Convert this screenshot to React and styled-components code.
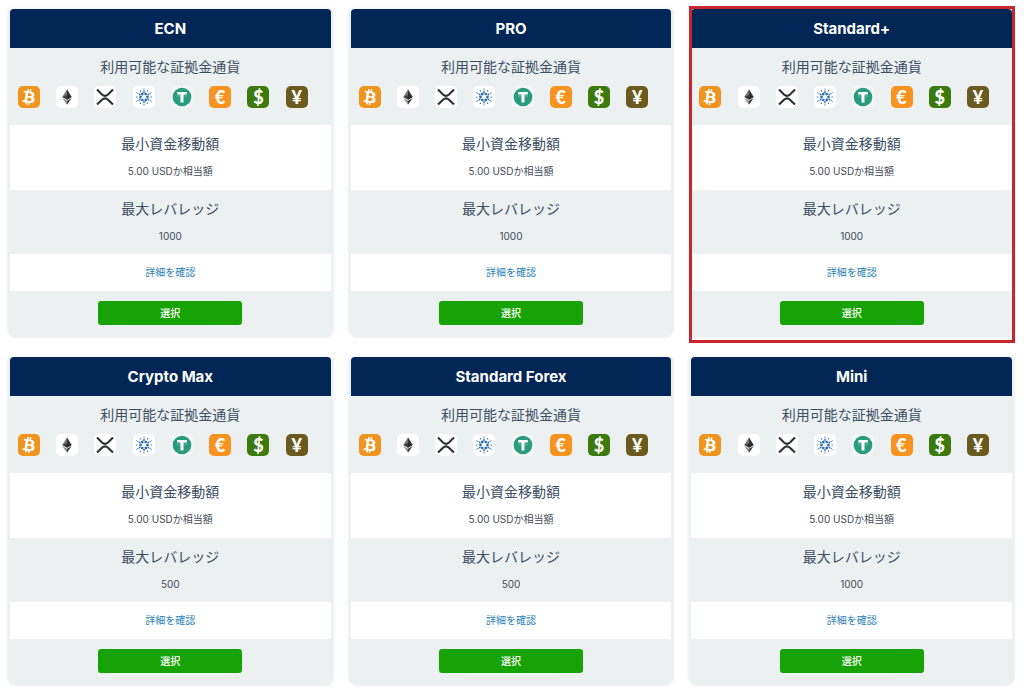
import React from "react";
import styled, { createGlobalStyle, css } from "styled-components";
import { FaBtc } from "react-icons/fa";

const GlobalStyle = createGlobalStyle`
  * {
    box-sizing: border-box;
  }
  body {
    margin: 0;
    background: #ffffff;
    color: #3a4a5c;
    font-family: Inter, "Noto Sans CJK JP", sans-serif;
  }
`;

const Grid = styled.main`
  display: grid;
  grid-template-columns: repeat(3, minmax(0, 1fr));
  gap: 20px 16px;
  padding: 9px 10px 8px 8px;
`;

const Card = styled.article`
  position: relative;
  padding: 0 2px;
  border-radius: 4px 4px 8px 8px;
  background: #ecf0f1;
  box-shadow: 0 0 3px rgba(30, 50, 70, 0.14);

  ${({ $highlighted }) =>
    $highlighted &&
    css`
      &::after {
        content: "";
        position: absolute;
        inset: -3px -1px -6px 0;
        border: 3px solid #c9252d;
        pointer-events: none;
      }
    `}
`;

const Title = styled.h2`
  margin: 0;
  height: 39px;
  border-radius: 4px 4px 0 0;
  background: #022757;
  color: #ffffff;
  font-family: Inter, sans-serif;
  font-size: 15px;
  font-weight: 700;
  line-height: 39px;
  text-align: center;
`;

const Section = styled.section`
  padding: ${({ $white }) => ($white ? "8px 0 11px" : "8px 0 10px")};
  background: ${({ $white }) => ($white ? "#ffffff" : "transparent")};
  text-align: center;
`;

const Label = styled.h3`
  margin: 0;
  color: #3c4e63;
  font-size: 14px;
  font-weight: 400;
  line-height: 22px;
`;

const Value = styled.p`
  margin: 8px 0 0;
  color: #444b55;
  font-size: 10px;
  line-height: 16px;
`;

const Currencies = styled.ul`
  display: flex;
  justify-content: space-between;
  margin: 8px 0 0;
  padding: 0 23px 7px 8px;
  list-style: none;
`;

const Currency = styled.li`
  display: flex;
  align-items: center;
  justify-content: center;
  width: 22px;
  height: 22px;
  border-radius: 5px;
  background: ${({ $color }) => $color};
  color: #ffffff;

  svg {
    display: block;
  }
`;

const BitcoinSign = styled(FaBtc)`
  width: 16px;
  height: 16px;
  transform: rotate(8deg);
`;

const Symbol = styled.span`
  font-family: Lato, sans-serif;
  font-size: 18px;
  font-weight: 900;
  line-height: 22px;
`;

const DetailRow = styled.div`
  height: 37px;
  background: #ffffff;
  text-align: center;
`;

const DetailLink = styled.a`
  display: inline-block;
  color: #2d83b5;
  font-size: 10px;
  line-height: 36px;
  text-decoration: none;
  vertical-align: top;
`;

const Footer = styled.footer`
  display: flex;
  justify-content: center;
  padding: 10px 0 12px;
`;

const SelectButton = styled.button`
  width: 45%;
  height: 24px;
  padding: 0;
  border: 0;
  border-radius: 3px;
  background: #17a305;
  color: #ffffff;
  font-family: inherit;
  font-size: 10px;
  font-weight: 500;
  line-height: 24px;
  cursor: pointer;
`;

const EthereumIcon = () => (
  <svg width="22" height="22" viewBox="0 0 22 22" aria-hidden="true">
    <path d="M11 3.2 6.3 11 11 13.8z" fill="#77777a" />
    <path d="M11 3.2 15.7 11 11 13.8z" fill="#343437" />
    <path d="M6.3 12 11 18.8V14.8z" fill="#8a8a8d" />
    <path d="M15.7 12 11 18.8V14.8z" fill="#3b3b3e" />
    <path d="M6.3 11 11 9l4.7 2L11 13.8z" fill="#252528" opacity=".7" />
  </svg>
);

const RippleIcon = () => (
  <svg width="22" height="22" viewBox="0 0 22 22" aria-hidden="true">
    <path
      d="M3 3.6 8 8.5q3 2.8 6 0L19 3.6M3 18.6 8 13.7q3-2.8 6 0l5 4.9"
      fill="none"
      stroke="#2b3035"
      strokeWidth="2.1"
    />
  </svg>
);

const CardanoIcon = () => (
  <svg width="22" height="22" viewBox="0 0 22 22" fill="#2a6cb4" aria-hidden="true">
    {[0, 60, 120, 180, 240, 300].map((angle) => (
      <g key={angle} transform={`rotate(${angle} 11 11)`}>
        <circle cx="12.7" cy="8" r="1.35" />
        <circle cx="11" cy="6" r="0.9" />
        <circle cx="11" cy="3.9" r="0.65" />
        <circle cx="11" cy="2.2" r="0.45" />
        <circle cx="14.6" cy="4.8" r="0.7" />
      </g>
    ))}
  </svg>
);

const TetherIcon = () => (
  <svg width="22" height="22" viewBox="0 0 22 22" aria-hidden="true">
    <circle cx="11" cy="11" r="9.3" fill="#289b7c" />
    <path d="M6.2 6h9.6v2.6h-3.3v8H9.5v-8H6.2z" fill="#ffffff" />
    <ellipse cx="11" cy="10.2" rx="5.2" ry="1" fill="none" stroke="#ffffff" strokeWidth=".4" opacity=".5" />
  </svg>
);

const currencies = [
  { name: "Bitcoin", color: "#ef951f", icon: <BitcoinSign aria-hidden="true" /> },
  { name: "Ethereum", color: "#ffffff", icon: <EthereumIcon /> },
  { name: "XRP", color: "#ffffff", icon: <RippleIcon /> },
  { name: "Cardano", color: "#ffffff", icon: <CardanoIcon /> },
  { name: "Tether", color: "#f2f6f6", icon: <TetherIcon /> },
  { name: "Euro", color: "#f7931e", icon: <Symbol>€</Symbol> },
  { name: "US Dollar", color: "#3d7a0e", icon: <Symbol>$</Symbol> },
  { name: "Yen", color: "#6b5a1e", icon: <Symbol>¥</Symbol> },
];

const accounts = [
  { name: "ECN", leverage: 1000 },
  { name: "PRO", leverage: 1000 },
  { name: "Standard+", leverage: 1000, highlighted: true },
  { name: "Crypto Max", leverage: 500 },
  { name: "Standard Forex", leverage: 500 },
  { name: "Mini", leverage: 1000 },
];

const AccountCard = ({ name, leverage, highlighted }) => (
  <Card $highlighted={highlighted}>
    <Title>{name}</Title>
    <Section>
      <Label>利用可能な証拠金通貨</Label>
      <Currencies>
        {currencies.map((currency) => (
          <Currency key={currency.name} $color={currency.color} aria-label={currency.name}>
            {currency.icon}
          </Currency>
        ))}
      </Currencies>
    </Section>
    <Section $white>
      <Label>最小資金移動額</Label>
      <Value>5.00 USDか相当額</Value>
    </Section>
    <Section>
      <Label>最大レバレッジ</Label>
      <Value>{leverage}</Value>
    </Section>
    <DetailRow>
      <DetailLink href="#details">詳細を確認</DetailLink>
    </DetailRow>
    <Footer>
      <SelectButton type="button">選択</SelectButton>
    </Footer>
  </Card>
);

export default function App() {
  return (
    <>
      <GlobalStyle />
      <Grid>
        {accounts.map((account) => (
          <AccountCard key={account.name} {...account} />
        ))}
      </Grid>
    </>
  );
}
